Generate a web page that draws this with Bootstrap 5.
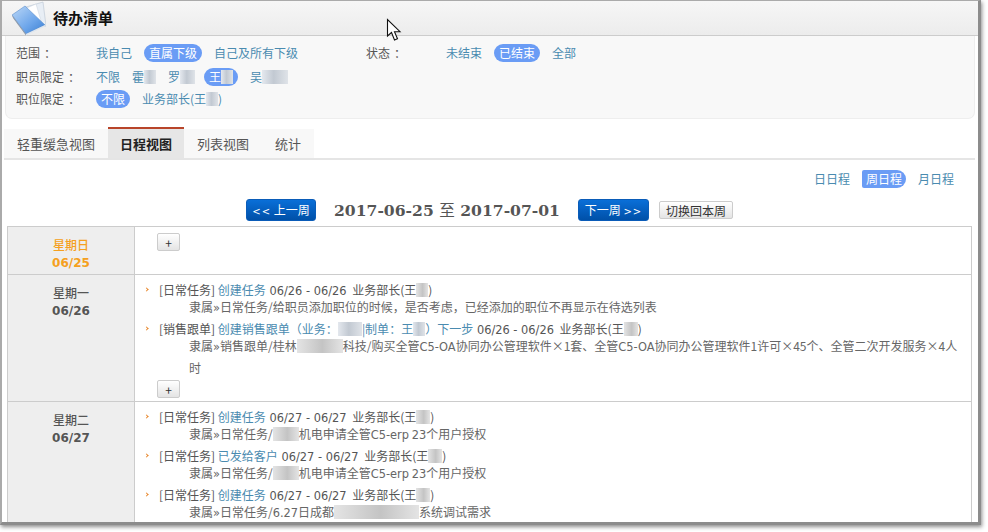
<!DOCTYPE html>
<html lang="zh"><head><meta charset="utf-8"><title>待办清单</title>
<link href="https://cdn.jsdelivr.net/npm/bootstrap@5.3.0/dist/css/bootstrap.min.css" rel="stylesheet">
<style>
html,body{margin:0;background:#fff;height:532px;overflow:hidden}
body{font:12px/18px "Noto Sans CJK SC",sans-serif;color:#555}
.pn{font-family:"Noto Sans CJK TC",sans-serif;line-height:1}
.frame{position:relative;width:981px;height:525px;border-top:1px solid #aaa;border-left:2px solid #aaa;border-right:3px solid #8c8c8c;border-bottom:3px solid #8c8c8c;box-shadow:1px 2px 4px rgba(0,0,0,.45);overflow:hidden;background:#fff}
.hdr{height:35px;background:linear-gradient(#f6f6f6,#ececec);border-bottom:1px solid #ccc;padding-left:10px;gap:7px}
.hdr-title{font:700 15px/20px "Noto Sans CJK SC",sans-serif;color:#111;margin-top:-1px}
.filt{margin:0 3px 0 3px;height:83px;background:#f8f8f8;border:1px solid #eee;border-top:0;border-radius:0 0 7px 7px;padding:8px 0 0 10px}
.frow{height:18px;line-height:18px;margin-bottom:6px}
.frow+.frow{margin-bottom:4px}
.flabel{width:80px;flex:none;color:#555}
.flabel .pn{margin-left:4px}
.fgroup{width:350px;flex:none}
.opt{margin-right:12px;color:#4a8bb0;text-decoration:none;white-space:nowrap}
.opt.on{background:#6a9cf5;color:#fff;border-radius:9px;padding:0 5px}
.bl{display:inline-block;height:14px;vertical-align:-2px;background:linear-gradient(90deg,#e4e8ee,#c2c9d2 45%,#dfe3e8)}
.bg1{background:linear-gradient(90deg,#e4e4e4,#c4c4c4 55%,#e4e4e4)}
.w12{width:12px}.w14{width:14px}.w15{width:15px}.w24{width:24px}.w26{width:26px}.w46{width:46px}.w85{width:85px}
.mn3{margin-right:-3px}
.tabbar{margin:8px 3px 0 2px;height:33px;border-bottom:2px solid #e5e5e5;align-items:flex-end}
.tabs-wrap{background:#f8f8f8;height:29px}
.tabbar .nav-link{font:13px/29px "Noto Sans CJK SC",sans-serif;color:#555;padding:0 13px;height:29px}
.tabbar .nav-link.active{background:#e6e6e6;color:#222;font-weight:700;border-top:2px solid #b8452a;height:31px;margin-top:-2px;padding:0 12px;line-height:29px}
.sched{height:18px;margin:10px 18px 0 0;justify-content:flex-end}
.sched .opt.on{padding:0 4px;border-radius:2px 9px 9px 2px}
.sched .opt:last-child{margin-right:6px}
.navrow{height:22px;margin-top:11px;padding-left:244px}
.btn.pg{background:linear-gradient(#0a6fd8,#0050a8);border:1px solid #0a5cb8;color:#fff;font:12px/18px "Noto Sans CJK SC",sans-serif;padding:1px 0;width:70px;height:22px;border-radius:3px;white-space:nowrap}
.btn.pg+.drange+.btn.pg{width:71px}
.btn.pg small{font:10px "DejaVu Sans",sans-serif;letter-spacing:1px}
.drange{font:700 15.6px/22px "DejaVu Serif","Noto Sans CJK SC",serif;color:#555;width:262px;text-align:center}
.drange .zhi{font-weight:400;font-family:"Noto Sans CJK SC",serif}
.btn.mini{background:linear-gradient(#fff,#e4e4e4);border:1px solid #ccc;color:#333;font:12px/15px "Noto Sans CJK SC",sans-serif;padding:0;height:18px;border-radius:2px}
.btn.cur{width:74px;margin-left:10px}
.btn.plus{width:23px;display:block}
.sched-tbl{margin:5px 0 0 5px;width:965px;table-layout:fixed;border-collapse:collapse}
.sched-tbl td{border:1px solid #ccc;padding:0;vertical-align:top;color:#555;background:#fff}
.sched-tbl td.day{width:127px;background:#eee;text-align:center;padding-top:9px;line-height:18px}
.day div{font-weight:500}
.day .dnum{font:700 12px/18px "DejaVu Sans",sans-serif}
.sched-tbl td.day.today{color:#f5a020}
.cell{padding:4px 0 0 9px}
.cell.tail{padding-bottom:30px}
.task{position:relative;padding-left:15px}
.task::before{content:"";position:absolute;left:1px;top:9px;width:3px;height:3px;border-top:1px solid #e8862a;border-right:1px solid #e8862a;transform:rotate(45deg)}
.tt{line-height:22px;height:22px;white-space:nowrap}
.dd{line-height:22px;margin:-5px 0 0 30px;width:772px;color:#666}
.lnk{color:#4a8bb0;text-decoration:none}
.dt{font:11.4px/1 "DejaVu Sans",sans-serif;margin:0 3px 0 1px}
.ltn{font-family:"DejaVu Sans",sans-serif;font-size:11.4px;line-height:1}
.pbox{margin:1px 0 0 13px;padding-bottom:3px}
.ptop{padding:6px 0 23px 22px}
.cursor{position:absolute;left:384px;top:17px}
</style></head><body>
<div class="frame">
  <div class="hdr d-flex align-items-center">
    <svg width="34" height="35" viewBox="0 0 34 35" aria-hidden="true">
      <path d="M14 6 31 1l3 24-6 1z" fill="#e8eef5" stroke="#b8c4d2" stroke-width=".6"/>
      <path d="M10 9 24 3l6 20-10 6z" fill="#fff" stroke="#c6d0dc" stroke-width=".5"/>
      <defs><linearGradient id="g" x1="0" y1="0" x2="1" y2="1"><stop offset="0" stop-color="#bcd8f7"/><stop offset=".6" stop-color="#6ca5ea"/><stop offset="1" stop-color="#3a7dd0"/></linearGradient></defs>
      <path d="M0 14 13 5 33 24 14 33z" fill="url(#g)" stroke="#5a8fcc" stroke-width=".6"/>
      <path d="M0 14 14 33 14 34.500 1 17z" fill="#8a97a8"/>
      <path d="M14 33 33 24 33 25.500 14 34.500z" fill="#dfe6ee"/>
    </svg>
    <div class="hdr-title">待办清单</div>
  </div>
  <div class="filt">
    <div class="frow d-flex">
      <div class="fgroup d-flex"><span class="flabel">范围<span class="pn">：</span></span><span class="d-flex"><a class="opt" href="#">我自己</a><a class="opt on" href="#">直属下级</a><a class="opt" href="#">自己及所有下级</a></span></div>
      <div class="d-flex"><span class="flabel">状态<span class="pn">：</span></span><span class="d-flex"><a class="opt" href="#">未结束</a><a class="opt on" href="#">已结束</a><a class="opt" href="#">全部</a></span></div>
    </div>
    <div class="frow d-flex">
      <span class="flabel">职员限定<span class="pn">：</span></span><span class="d-flex"><a class="opt" href="#">不限</a><a class="opt" href="#">霍<span class="bl w12"></span></a><a class="opt" href="#">罗<span class="bl w15 mn3"></span></a><a class="opt on" href="#">王<span class="bl w12"></span></a><a class="opt" href="#">吴<span class="bl w26"></span></a></span>
    </div>
    <div class="frow d-flex">
      <span class="flabel">职位限定<span class="pn">：</span></span><span class="d-flex"><a class="opt on" href="#">不限</a><a class="opt" href="#">业务部长(王<span class="bl w12"></span>)</a></span>
    </div>
  </div>
  <div class="tabbar d-flex">
    <div class="nav tabs-wrap">
      <a class="nav-link" href="#">轻重缓急视图</a>
      <a class="nav-link active" href="#">日程视图</a>
      <a class="nav-link" href="#">列表视图</a>
      <a class="nav-link" href="#">统计</a>
    </div>
  </div>
  <div class="sched d-flex">
    <a class="opt" href="#">日日程</a><a class="opt on" href="#">周日程</a><a class="opt" href="#">月日程</a>
  </div>
  <div class="navrow d-flex align-items-center">
    <button class="btn pg" type="button"><small>&lt;&lt;</small> 上一周</button>
    <div class="drange">2017-06-25 <span class="zhi">至</span> 2017-07-01</div>
    <button class="btn pg" type="button">下一周 <small>&gt;&gt;</small></button>
    <button class="btn mini cur" type="button">切换回本周</button>
  </div>
  <table class="sched-tbl">
    <tr>
      <td class="day today"><div>星期日</div><div class="dnum">06/25</div></td>
      <td><div class="ptop"><button class="btn mini plus" type="button">+</button></div></td>
    </tr>
    <tr>
      <td class="day"><div>星期一</div><div class="dnum">06/26</div></td>
      <td><div class="cell">
        <div class="task"><div class="tt">[日常任务] <a class="lnk" href="#">创建任务</a> <span class="dt">06/26 - 06/26</span> 业务部长(王<span class="bl bg1 w12"></span>)</div>
        <div class="dd">隶属<span class="ltn">»</span>日常任务/给职员添加职位的时候<span class="pn">，</span>是否考虑<span class="pn">，</span>已经添加的职位不再显示在待选列表</div></div>
        <div class="task"><div class="tt">[销售跟单] <a class="lnk" href="#">创建销售跟单<span class="pn">（</span>业务<span class="pn">：</span><span class="bl w24"></span>|制单<span class="pn">：</span>王<span class="bl w12"></span><span class="pn">）</span>下一步</a> <span class="dt">06/26 - 06/26</span> 业务部长(王<span class="bl bg1 w14"></span>)</div>
        <div class="dd">隶属<span class="ltn">»</span>销售跟单/桂林<span class="bl bg1 w46"></span>科技/购买全管<span class="ltn">C5-OA</span>协同办公管理软件×1套、全管<span class="ltn">C5-OA</span>协同办公管理软件1许可×45个、全管二次开发服务×4人时</div></div>
        <div class="pbox"><button class="btn mini plus" type="button">+</button></div>
      </div></td>
    </tr>
    <tr>
      <td class="day"><div>星期二</div><div class="dnum">06/27</div></td>
      <td><div class="cell tail">
        <div class="task"><div class="tt">[日常任务] <a class="lnk" href="#">创建任务</a> <span class="dt">06/27 - 06/27</span> 业务部长(王<span class="bl bg1 w14"></span>)</div>
        <div class="dd">隶属<span class="ltn">»</span>日常任务/<span class="bl bg1 w26"></span>机电申请全管<span class="ltn">C5-erp</span> <span class="ltn">23</span>个用户授权</div></div>
        <div class="task"><div class="tt">[日常任务] <a class="lnk" href="#">已发给客户</a> <span class="dt">06/27 - 06/27</span> 业务部长(王<span class="bl bg1 w14"></span>)</div>
        <div class="dd">隶属<span class="ltn">»</span>日常任务/<span class="bl bg1 w26"></span>机电申请全管<span class="ltn">C5-erp</span> <span class="ltn">23</span>个用户授权</div></div>
        <div class="task"><div class="tt">[日常任务] <a class="lnk" href="#">创建任务</a> <span class="dt">06/27 - 06/27</span> 业务部长(王<span class="bl bg1 w14"></span>)</div>
        <div class="dd">隶属<span class="ltn">»</span>日常任务/<span class="ltn">6.27</span>日成都<span class="bl bg1 w85"></span>系统调试需求</div></div>
      </div></td>
    </tr>
  </table>
  <svg class="cursor" width="16" height="24" viewBox="0 0 16 24" aria-hidden="true"><path d="M1.500 1.500V18l4-3.500 3 7.500 3-1.300-3-7h5.500z" fill="#fff" stroke="#111" stroke-width="1.100"/></svg>
</div>
<script src="https://cdn.jsdelivr.net/npm/bootstrap@5.3.0/dist/js/bootstrap.bundle.min.js"></script>
</body></html>
